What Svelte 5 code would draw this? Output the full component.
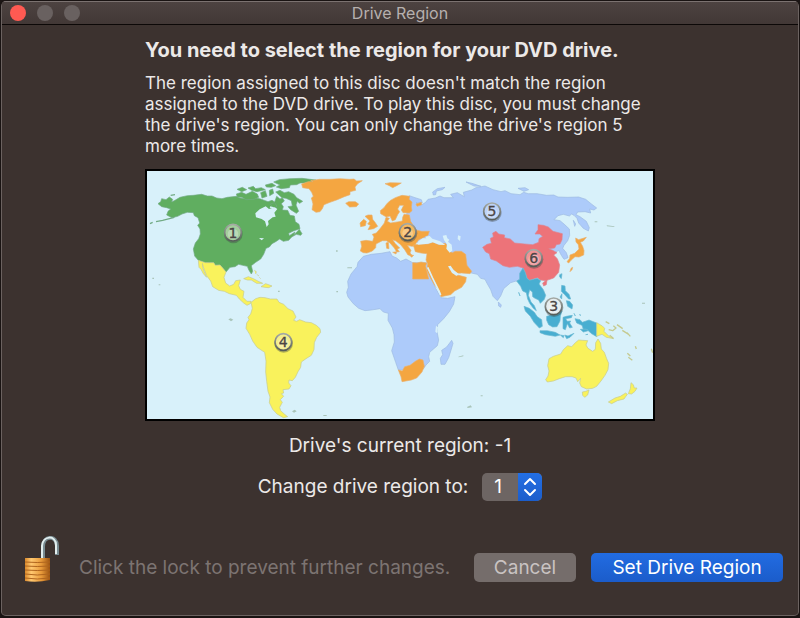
<script lang="ts">
  const regions = [1, 2, 3, 4, 5, 6];
  const currentRegion = -1;
  const changesLeft = 5;

  let selected = $state(1);
  let unlocked = $state(true);

  const badges = [
    { n: 1, x: 279, y: 203, fill: '#a3cd9c' },
    { n: 2, x: 803, y: 201, fill: '#f6b95f' },
    { n: 3, x: 1241, y: 424, fill: '#e6edef' },
    { n: 4, x: 430, y: 531, fill: '#f4ee8c' },
    { n: 5, x: 1056, y: 139, fill: '#bcd3f8' },
    { n: 6, x: 1181, y: 279, fill: '#ef9497' }
  ];
</script>

<div class="window" role="dialog" aria-labelledby="title">
  <header>
    <div class="lights">
      <button type="button" class="light close" aria-label="Close"></button>
      <button type="button" class="light" aria-label="Minimize" disabled></button>
      <button type="button" class="light" aria-label="Zoom" disabled></button>
    </div>
    <h1 id="title">Drive Region</h1>
  </header>

  <main>
    <h2>You need to select the region for your DVD drive.</h2>
    <p class="info">The region assigned to this disc doesn't match the region assigned to the DVD drive. To play this disc, you must change the drive's region. You can only change the drive's region {changesLeft} more times.</p>

    <svg class="map" viewBox="21 18 1518 744" role="img" aria-label="World map of DVD regions">
      <defs>
        <linearGradient id="rim" x2="0" y2="1">
          <stop offset="0" stop-color="#a5aaa5" />
          <stop offset="1" stop-color="#565c58" />
        </linearGradient>
      </defs>
      <rect x="21" y="18" width="1518" height="744" fill="#d8f1fa" />

      <!-- Americas -->
      <g class="green">
        <path d="M54 116L62 110L65 101L78 104L88 96L98 103L95 111L105 106L120 97L142 92L160 91L185 88L202 93L216 93L230 99L246 101L262 97L290 94L300 99L322 101L340 97L362 102L384 110L396 106L404 111L410 94L420 102L427 98L433 108L424 116L430 125L427 135L443 136L450 151L463 153L466 170L477 178L480 191L460 198L446 205L448 212L465 201L462 210L478 193L486 206L482 211L469 208L455 216L446 226L430 229L419 222L407 230L396 236L388 246L378 250L371 268L362 282L347 292L334 302L338 319L334 327L326 314L322 304L308 301L296 298L285 305L270 307L258 321L248 309L240 300L226 301L221 293L208 294L196 293L175 286L164 273L160 252L166 234L176 221L181 207L180 192L173 181L179 174L174 158L163 152L160 143L142 142L126 147L113 154L96 158L80 150L84 139L92 132L80 128L65 125Z" />
        <path d="M30 176L38 172M48 170L68 166L103 157M92 91L105 89" fill="none" stroke-width="4" />
        <path d="M289 87L305 82L318 88L337 79L352 87L356 97L342 103L318 104L306 97L292 96ZM291 73L307 67L320 74L305 80ZM324 69L340 64L347 71L364 68L376 74L351 80L335 76ZM362 83L376 77L381 94L366 99ZM388 76L398 72L401 85L389 92ZM376 60L396 55L407 62L394 67L379 66ZM401 51L418 44L450 41L486 40L528 45L515 54L480 54L470 59L451 60L448 68L424 71L409 66L420 60ZM407 81L420 76L433 83L446 80L462 88L470 98L488 109L479 115L472 109L468 120L476 139L469 145L452 134L444 125L457 123L454 107L438 100L426 98ZM391 117L404 113L411 124L401 131Z" />
      </g>
      <path fill="#d8f1fa" d="M412 132L404 127L387 132L377 124L359 133L346 145L348 157L365 162L375 169L380 186L386 178L384 168L398 157L407 155L403 143ZM357 219L372 220L365 226Z" />
      <path d="M390 126L401 129" stroke="#d8f1fa" stroke-width="5" />

      <g class="yellow">
        <path d="M175 286L196 293L221 293L226 301L240 300L248 309L258 321L252 337L257 354L269 363L281 358L287 347L301 345L296 362L301 373L312 379L309 397L321 409L333 409L331 416L321 421L311 414L299 403L289 391L268 386L253 379L236 376L218 365L212 348L200 332L191 309L187 295L188 307L193 321L200 337L190 326L183 313L177 307Z" />
        <path d="M311 341L325 335L340 341L357 350L368 355L350 355L334 345L322 345ZM363 365L377 356L396 363L386 368L375 367ZM343 316L349 320L347 327M350 328L357 333M358 337L362 341" />
        <path d="M333 412L347 401L360 397L375 398L391 402L411 402L417 412L431 418L444 431L459 438L468 456L461 466L470 469L479 464L497 471L514 473L529 481L540 491L542 502L530 517L523 533L522 554L514 571L498 581L484 591L482 607L474 620L466 637L457 647L447 645L446 654L453 662L447 672L429 674L431 684L424 686L431 694L421 704L427 712L419 727L422 737L434 748L443 755L430 758L411 747L398 733L388 713L390 696L384 679L380 649L377 621L378 588L374 562L351 547L338 528L329 508L318 490L320 474L327 464L324 457L332 447L337 430Z" />
      </g>

      <g transform="translate(510 0)">
        <!-- Asia and Africa, region 5 -->
        <g class="blue">
          <path d="M298 92L315 98L334 104L337 113L318 113L331 122L347 112L354 103L376 99L390 93L402 98L430 98L422 88L442 83L463 95L460 82L485 75L498 68L525 63L549 74L573 80L585 77L603 86L630 89L641 82L655 86L681 86L710 91L731 90L744 96L772 97L806 96L827 103L843 116L860 129L852 135L839 132L842 144L825 140L803 141L798 149L810 155L829 169L838 188L835 198L820 190L806 174L801 160L792 151L785 147L778 153L760 148L744 152L732 164L750 167L763 178L778 192L779 211L773 227L762 241L758 250L769 263L774 278L762 283L754 271L746 256L650 320L625 346L602 353L581 371L572 393L562 407L549 394L542 374L531 355L525 343L512 340L502 328L480 323L400 270L310 225L290 150Z" />
          <path d="M160 274L184 268L213 265L240 260L246 273L260 279L272 289L288 282L308 293L350 293L362 338L377 370L393 398L413 400L435 395L431 417L418 440L401 461L383 479L381 500L386 525L382 542L359 562L356 575L359 589L348 600L340 612L265 615L257 592L245 557L253 531L252 509L247 489L234 466L235 445L220 441L210 431L184 435L165 437L146 430L130 416L114 396L110 382L115 367L113 349L123 327L141 305L144 292Z" />
          <path d="M425 526L429 535L424 552L416 578L405 598L393 598L391 580L398 569L395 556L410 546Z" />
          <path d="M565 411L574 420L572 427L566 423ZM370 90L368 81L382 71L405 67L397 74L379 78L377 89ZM468 51L486 55L513 64L492 63ZM624 70L645 68L656 74L642 79ZM790 166L797 177L794 184Z" />
        </g>

        <!-- Europe, Middle East, South Africa -->
        <g class="orange">
          <path d="M-25 57L-5 50L9 50L2 47L28 43L60 43L89 41L118 43L132 42L140 48L157 47L143 56L135 66L137 76L120 80L120 89L103 95L82 104L60 112L42 119L37 131L30 140L18 142L6 134L9 117L4 99L10 94L5 82L-3 71L-22 68Z" />
          <path d="M107 115L116 110L136 110L146 117L139 125L119 126ZM225 56L240 53L274 54L260 62L248 68L238 62ZM318 117L334 112L335 119L321 124Z" />
          <path d="M212 146L211 137L222 128L230 117L240 107L256 98L276 91L299 94L297 103L306 111L304 126L306 137L298 144L279 143L274 135L281 121L269 121L263 132L269 140L263 149L256 164L247 168L240 153L229 156Z" />
          <path d="M223 174L228 157L238 160L232 169L242 174L267 170L277 168L278 157L282 148L298 150L302 169L311 183L318 195L335 199L358 199L354 211L338 219L326 224L318 235L315 243L305 244L292 241L303 256L300 264L306 271L294 270L284 254L272 239L258 228L248 224L255 235L269 249L262 252L268 260L260 261L253 249L239 233L229 227L217 227L211 230L198 237L197 248L187 258L171 264L160 263L151 258L155 244L152 229L168 226L188 229L192 216L187 208L199 204L211 190Z" />
          <path d="M165 154L174 150L186 150L188 163L196 173L203 184L191 191L174 194L181 181L173 177L180 168ZM150 174L161 163L169 169L166 182L152 185ZM228 234L235 232L237 251L230 250ZM248 262L260 260L258 267ZM298 270L311 271L305 277Z" />
          <path d="M310 240L328 238L354 237L369 232L386 239L406 235L413 244L413 255L427 263L436 259L454 259L467 268L469 286L471 301L485 319L480 326L455 324L442 325L428 312L420 304L427 321L438 332L446 331L469 337L467 350L455 367L434 378L422 389L393 395L389 378L373 359L360 336L351 317L353 297L348 285L351 266L333 264L316 260Z" />
          <path d="M308 293L321 294L333 291L350 294L347 303L356 342L308 342Z" />
          <path d="M265 615L277 618L284 605L300 601L316 589L328 582L339 585L343 604L336 621L320 639L304 645L276 650L273 635Z" />
          <path d="M797 219L806 224L829 217L820 228L811 232L818 244L822 257L821 270L807 276L795 275L783 286L776 294L771 290L779 280L780 270L794 265L807 252L805 239L798 231ZM783 310L788 307L786 314L780 320Z" />
        </g>
        <!-- inland seas -->
        <path fill="#d8f1fa" d="M323 239L325 229L338 220L349 220L346 215L359 213L367 221L390 229L406 240L388 239L368 232L354 236ZM398 212L409 210L412 220L418 224L414 230L425 239L427 257L419 263L409 251L411 238L402 225ZM444 211L452 214L450 228L443 222ZM414 304L422 302L431 316L446 326L440 332L426 324ZM378 482L384 487L381 505L376 500Z" />
        <path d="M353 307L367 338L386 376L392 390" fill="none" stroke="#d8f1fa" stroke-width="5" />
      </g>

      <g transform="translate(1020 0)">
        <g class="red">
          <path d="M8 247L21 238L34 235L31 220L40 216L38 204L48 199L56 207L74 210L73 218L91 222L104 234L134 237L158 239L176 232L177 221L188 214L179 207L165 207L174 194L174 179L190 181L205 186L219 199L247 206L246 224L240 237L229 239L224 249L206 251L218 256L231 263L221 270L232 281L239 300L236 322L221 339L201 346L199 359L191 363L188 354L197 347L181 345L172 338L149 346L141 340L136 323L129 309L112 304L88 307L69 302L49 288L32 282L28 266L17 261Z" />
        </g>
        <g class="teal">
          <path d="M129 309L136 323L141 340L149 346L172 340L182 347L177 357L190 374L197 391L193 403L181 415L176 405L165 400L158 395L157 381L149 374L145 391L153 411L163 422L169 437L160 430L149 415L143 402L139 383L128 378L122 364L110 348L119 343L119 325Z" />
          <path d="M132 424L148 430L163 442L172 455L185 464L187 484L178 489L162 472L151 454L136 438ZM180 497L202 497L226 502L240 510L226 514L196 509L180 503ZM200 454L215 450L228 437L236 429L246 438L241 453L240 468L231 485L218 486L206 479L200 466ZM249 457L259 454L277 451L274 458L257 461L262 469L272 468L269 474L277 487L269 489L262 476L256 494L249 491ZM241 510L252 512L250 518ZM254 510L264 513L282 505L270 517L260 521ZM285 461L300 464L307 472L327 465L350 474L350 515L333 505L322 494L310 493L306 481L290 474ZM301 493L318 492L325 497L310 501ZM245 361L255 363L256 377L267 388L272 402L266 402L253 388L244 379ZM240 396L246 386L245 402ZM259 407L269 409L278 420L276 432L263 424ZM239 329L246 326L244 341L239 336ZM282 445L286 453ZM317 509L324 508ZM298 449L303 451ZM116 382L120 393Z" />
        </g>
        <g class="yellow">
          <path d="M350 473L367 483L374 490L372 499L386 513L401 521L379 517L366 508L350 514Z" />
          <path d="M202 651L197 644L204 633L207 618L203 602L207 581L220 574L242 567L250 554L263 542L275 545L286 533L296 525L323 527L318 540L324 550L338 559L346 553L347 533L354 522L362 535L364 552L373 562L380 581L386 595L384 614L375 631L363 648L350 664L338 670L320 672L304 665L299 654L302 640L293 650L288 639L276 635L257 635L238 641L220 648ZM307 681L317 679L327 675L323 690L314 697L308 691ZM453 653L460 659L463 669L471 669L465 679L455 687L445 686L451 671ZM385 711L405 699L421 694L437 684L442 688L432 702L412 707L395 716Z" />
          <path d="M377 470L388 476M386 494L398 497L408 489L400 482M389 511L400 520M411 479L428 491M427 496L446 508M441 503L451 514M442 565L451 573M445 577L457 586M466 544L469 552M514 551L518 563" fill="none" stroke-width="4" />
        </g>
      </g>

      <g fill="#a9c4b9">
        <path d="M37 338h5v4h-5zM56 358h5v3h-5zM265 463l7-3 8 4-7 5zM456 739l8-5 6 5-8 4zM414 377h5v4h-5zM550 750h10v3h-10zM981 726l11-5 4 6-13 2zM955 575l15-4v3l-14 3zM1022 691h6v3h-6zM1506 413h9v3h-9zM1364 169h8v3h-8zM1400 181l23 3v2l-22-2zM622 307h14v3h-14zM588 256h5v4h-5zM589 378h5v4h-5z" />
      </g>

      {#each badges as b}
        <circle cx={b.x + 1} cy={b.y + 4} r="28" fill="#404848" opacity=".4" />
        <circle cx={b.x} cy={b.y} r="25" fill={b.fill} stroke="url(#rim)" stroke-width="5" />
        <circle cx={b.x} cy={b.y + 4} r="16" fill="#fff" opacity=".25" />
        <text x={b.x} y={b.y + 15}>{b.n}</text>
      {/each}
    </svg>

    <p class="current">Drive's current region: {currentRegion}</p>

    <div class="change">
      <label for="region">Change drive region to:</label>
      <span class="select">
        <select id="region" bind:value={selected}>
          {#each regions as r}
            <option value={r}>{r}</option>
          {/each}
        </select>
        <svg width="24" height="28" viewBox="0 0 24 28" aria-hidden="true">
          <path d="M7 11L12 6L17 11M7 17L12 22L17 17" />
        </svg>
      </span>
    </div>
  </main>

  <footer>
    <button type="button" class="lock" aria-label="Lock" aria-pressed={!unlocked} onclick={() => (unlocked = !unlocked)}>
      <svg width="36" height="46" viewBox="0 0 36 46">
        <defs>
          <linearGradient id="brass">
            <stop offset="0" stop-color="#d9892c" />
            <stop offset=".25" stop-color="#ffc870" />
            <stop offset=".65" stop-color="#e89a3a" />
            <stop offset="1" stop-color="#9c5310" />
          </linearGradient>
        </defs>
        <path d="M19 23V11C19 -1 33 -1 33 10V19" fill="none" stroke="#788b91" stroke-width="4" />
        <path d="M18 23V10C19 -1 32 -1 32 9V18" fill="none" stroke="#e2eeee" stroke-width="2" />
        <path d="M1 22H26V44Q13 47 1 45Z" fill="url(#brass)" />
        <path d="M1 26Q13 27 26 26M1 30Q13 31 26 30M1 34Q13 35 26 34M1 38Q13 40 26 38M1 42Q13 44 26 42" fill="none" stroke="#b0651e" />
      </svg>
    </button>
    <span class="hint">Click the lock to prevent further changes.</span>
    <button type="button" class="btn">Cancel</button>
    <button type="button" class="btn primary">Set Drive Region</button>
  </footer>
</div>

<style>
:global(body){background:#1b1514}
.window{box-sizing:border-box;min-height:100vh;display:flex;flex-direction:column;background:#3c322f;color:#ece9e8;font-family:Inter,"Liberation Sans",sans-serif;border:1px solid #191312;border-bottom-width:2px;border-radius:6px;box-shadow:inset 0 0 0 1px #6b6260;overflow:hidden}
header{display:grid;grid-template-columns:1fr auto 1fr;align-items:center;box-sizing:border-box;height:24px;margin:0 1px;background:linear-gradient(#4d4341,#423836);border-top:1px solid #7b7270;border-bottom:1px solid #0c0807}
.lights{display:flex;gap:11px;padding-left:8px}
.light{width:16px;height:16px;padding:0;border:0;border-radius:50%;background:#696160}
.light.close{background:#ff5a52}
h1{margin:0;font-size:16px;line-height:20px;font-weight:400;color:#b6b0ae}
main{width:100%;max-width:510px;margin:0 auto;padding-top:13px}
h2{margin:0 0 11px;font-size:20px;line-height:24px;font-weight:700;white-space:nowrap}
.info{margin:0 0 12px;font-size:17px;line-height:21px}
.map{display:block;box-sizing:border-box;width:100%;border:2px solid #000}
.map g{stroke-width:2;stroke-linejoin:round}
.green{fill:#60ae60;stroke:#72ab85}
.yellow{fill:#f9f25c;stroke:#c5ca90}
.blue{fill:#adcbfa;stroke:#9db9e1}
.orange{fill:#f4a641;stroke:#e9b170}
.red{fill:#ed7379;stroke:#dc8791}
.teal{fill:#48aed1;stroke:#69b8d2}
.map text{font:42px "DejaVu Sans",sans-serif;text-anchor:middle;fill:#4b4545;stroke:#4b4545;stroke-width:1px}
.current{margin:12px 0 0;text-align:center;font-size:19px;line-height:26px}
.change{display:flex;justify-content:center;align-items:center;gap:14px;margin-top:14px;font-size:19px;line-height:28px}
.select{display:inline-flex;position:relative}
select{appearance:none;width:60px;height:28px;padding:0 24px 0 12px;border:0;border-radius:5px;background:#6d6563;color:#fff;font:inherit}
.select svg{position:absolute;right:0;top:0;background:linear-gradient(#236fe4,#1b5dcb);border-radius:0 5px 5px 0;pointer-events:none}
.select path{fill:none;stroke:#fff;stroke-width:2;stroke-linecap:round;stroke-linejoin:round}
footer{display:flex;align-items:flex-end;margin-top:auto;padding:0 16px 34px 23px}
.lock{display:flex;padding:0;border:0;background:none}
.hint{flex:1;margin-left:19px;font-size:19px;line-height:28px;color:#7c7472;white-space:nowrap}
.btn{flex:none;width:102px;height:29px;margin-left:15px;padding:0;border:0;border-radius:5px;background:#756d6b;color:#c9c3c2;font:inherit;font-size:19px;line-height:28px}
.btn.primary{width:192px;background:linear-gradient(#226ce2,#1b5cca);color:#fff}
</style>
